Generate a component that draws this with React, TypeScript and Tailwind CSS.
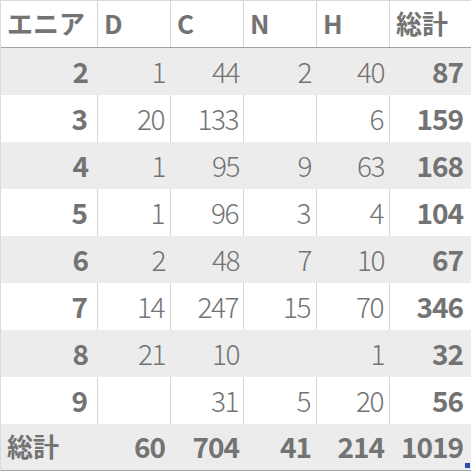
import React from "react";

const rows: { label: string; d: string; c: string; n: string; h: string; t: string }[] = [
  { label: "2", d: "1", c: "44", n: "2", h: "40", t: "87" },
  { label: "3", d: "20", c: "133", n: "", h: "6", t: "159" },
  { label: "4", d: "1", c: "95", n: "9", h: "63", t: "168" },
  { label: "5", d: "1", c: "96", n: "3", h: "4", t: "104" },
  { label: "6", d: "2", c: "48", n: "7", h: "10", t: "67" },
  { label: "7", d: "14", c: "247", n: "15", h: "70", t: "346" },
  { label: "8", d: "21", c: "10", n: "", h: "1", t: "32" },
  { label: "9", d: "", c: "31", n: "5", h: "20", t: "56" },
];

const font = { fontFamily: '"Noto Sans CJK JP", "Noto Sans", sans-serif' };

export default function App() {
  return (
    <div className="relative w-[471px] h-[471px] bg-white text-[#737373] border-t border-l border-[#dadada] overflow-hidden" style={font}>
      <div className="grid grid-cols-[97px_73px_73px_73px_73px_81px] h-[47px] border-b border-[#a3a3a3] text-[26px] font-bold leading-none">
        <div className="flex items-center pl-[6px] pb-[3px] border-r border-[#d6d6d6]">エニア</div>
        <div className="flex items-center pl-[6px] pb-[3px] border-r border-[#d6d6d6]">D</div>
        <div className="flex items-center pl-[6px] pb-[3px] border-r border-[#d6d6d6]">C</div>
        <div className="flex items-center pl-[6px] pb-[3px] border-r border-[#d6d6d6]">N</div>
        <div className="flex items-center pl-[6px] pb-[3px] border-r border-[#d6d6d6]">H</div>
        <div className="flex items-center pl-[6px] pb-[3px]">総計</div>
      </div>
      {rows.map((r, i) => {
        const gray = i % 2 === 0;
        const br = gray ? "" : "border-r border-[#d6d6d6]";
        return (
          <div
            key={r.label}
            className={`grid grid-cols-[97px_73px_73px_73px_73px_81px] h-[47px] text-[28px] leading-none ${gray ? "bg-[#ececec]" : "bg-white"}`}
          >
            <div className={`flex items-center justify-end pr-[10px] pb-[2px] font-bold tracking-[-1px] ${br}`}>{r.label}</div>
            <div className={`flex items-center justify-end pr-[6px] pb-[2px] font-light tracking-[-1.5px] ${br}`}>{r.d}</div>
            <div className={`flex items-center justify-end pr-[5px] pb-[2px] font-light tracking-[-1.5px] ${br}`}>{r.c}</div>
            <div className={`flex items-center justify-end pr-[6px] pb-[2px] font-light tracking-[-1.5px] ${br}`}>{r.n}</div>
            <div className={`flex items-center justify-end pr-[6px] pb-[2px] font-light tracking-[-1.5px] ${br}`}>{r.h}</div>
            <div className="flex items-center justify-end pr-[8px] pb-[2px] font-bold tracking-[-1px]">{r.t}</div>
          </div>
        );
      })}
      <div className="grid grid-cols-[97px_73px_73px_73px_73px_81px] h-[47px] text-[28px] leading-none font-bold bg-[#ececec] border-b border-[#a3a3a3] tracking-[-1px]">
        <div className="flex items-center pl-[6px] pb-[2px] text-[26px] tracking-normal">総計</div>
        <div className="flex items-center justify-end pr-[6px] pb-[2px]">60</div>
        <div className="flex items-center justify-end pr-[5px] pb-[2px]">704</div>
        <div className="flex items-center justify-end pr-[6px] pb-[2px]">41</div>
        <div className="flex items-center justify-end pr-[6px] pb-[2px]">214</div>
        <div className="flex items-center justify-end pr-[8px] pb-[2px]">1019</div>
      </div>
      <div className="absolute right-[1px] bottom-[3px] w-[5px] h-[5px] bg-[#2e4bb0]" />
    </div>
  );
}
